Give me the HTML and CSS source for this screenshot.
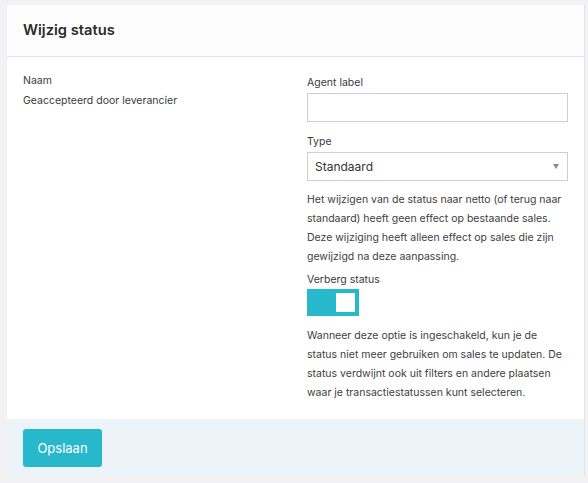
FILE: index.html
```html
<!DOCTYPE html>
<html lang="nl">
<head>
<meta charset="utf-8">
<title>Wijzig status</title>
<link rel="stylesheet" href="styles.css">
</head>
<body>
<div class="page">
  <div class="card">
    <div class="card-header">
      <h1 class="title">Wijzig status</h1>
    </div>
    <div class="card-body">
      <div class="col-left">
        <div class="line">Naam</div>
        <div class="line">Geaccepteerd door leverancier</div>
      </div>
      <div class="col-right">
        <label class="label">Agent label</label>
        <div class="input"></div>
        <label class="label label-type">Type</label>
        <div class="select">
          <span>Standaard</span>
          <span class="arrow"></span>
        </div>
        <p class="help">Het wijzigen van de status naar netto (of terug naar standaard) heeft geen effect op bestaande sales. Deze wijziging heeft alleen effect op sales die zijn gewijzigd na deze aanpassing.</p>
        <label class="label label-toggle">Verberg status</label>
        <div class="toggle"><span class="knob"></span></div>
        <p class="help help-2">Wanneer deze optie is ingeschakeld, kun je de status niet meer gebruiken om sales te updaten. De status verdwijnt ook uit filters en andere plaatsen waar je transactiestatussen kunt selecteren.</p>
      </div>
    </div>
    <div class="card-footer">
      <button class="btn">Opslaan</button>
    </div>
  </div>
</div>
</body>
</html>
```

FILE: styles.css
```css
* { box-sizing: border-box; }
html, body { margin: 0; padding: 0; }
body {
  background: #f2f2f4;
  font-family: Inter, "Noto Sans", sans-serif;
  color: #3a3a3a;
  font-size: 10.5px;
}
.page {
  padding: 5px 4px 6px 7px;
}
.card {
  background: #fff;
  width: 577px;
  box-shadow: 1px 0 0 #e4e4e6;
}
.card-header {
  height: 52px;
  background: #fdfdfd;
  border-bottom: 1px solid #e6e6e8;
  padding: 0 16px;
  display: flex;
  align-items: center;
}
.title {
  margin: 0;
  font-size: 14.7px;
  font-weight: 600;
  color: #2b2b2b;
  position: relative;
  top: -1px;
}
.card-body {
  display: grid;
  grid-template-columns: 261px 261px;
  column-gap: 23px;
  padding: 14px 16px 17px 16px;
}
.col-left .line {
  line-height: 20px;
  color: #3a3a3a;
}
.col-right {
  padding-top: 2px;
  display: flex;
  flex-direction: column;
}
.label {
  display: block;
  line-height: 19px;
  color: #3a3a3a;
  margin-bottom: 1px;
}
.label-type { margin-top: 10px; margin-bottom: 1px; }
.input {
  height: 29px;
  border: 1px solid #cfcfcf;
  background: #fff;
}
.select {
  height: 29px;
  border: 1px solid #cfcfcf;
  background: #fff;
  display: flex;
  align-items: center;
  justify-content: space-between;
  padding: 0 8px 0 7px;
  font-size: 12px;
  color: #333;
}
.arrow {
  width: 0;
  height: 0;
  border-left: 3.5px solid transparent;
  border-right: 3.5px solid transparent;
  border-top: 5px solid #8a8a8a;
}
.help {
  margin: 9px 0 0 0;
  line-height: 19px;
  color: #404040;
}
.label-toggle { margin-top: 4px; margin-bottom: 0; }
.toggle {
  width: 52px;
  height: 27px;
  background: #27b8cc;
  position: relative;
}
.knob {
  position: absolute;
  right: 4px;
  top: 4px;
  width: 19px;
  height: 19px;
  background: #fff;
}
.help-2 { margin-top: 10px; }
.card-footer {
  background: #ecf4fa;
  height: 57px;
  padding: 10px 16px;
}
.btn {
  height: 38px;
  width: 79px;
  border: 0;
  border-radius: 3px;
  background: #27b8cc;
  color: #fff;
  font-family: Inter, "Noto Sans", sans-serif;
  font-size: 13px;
  padding: 0;
}
```
